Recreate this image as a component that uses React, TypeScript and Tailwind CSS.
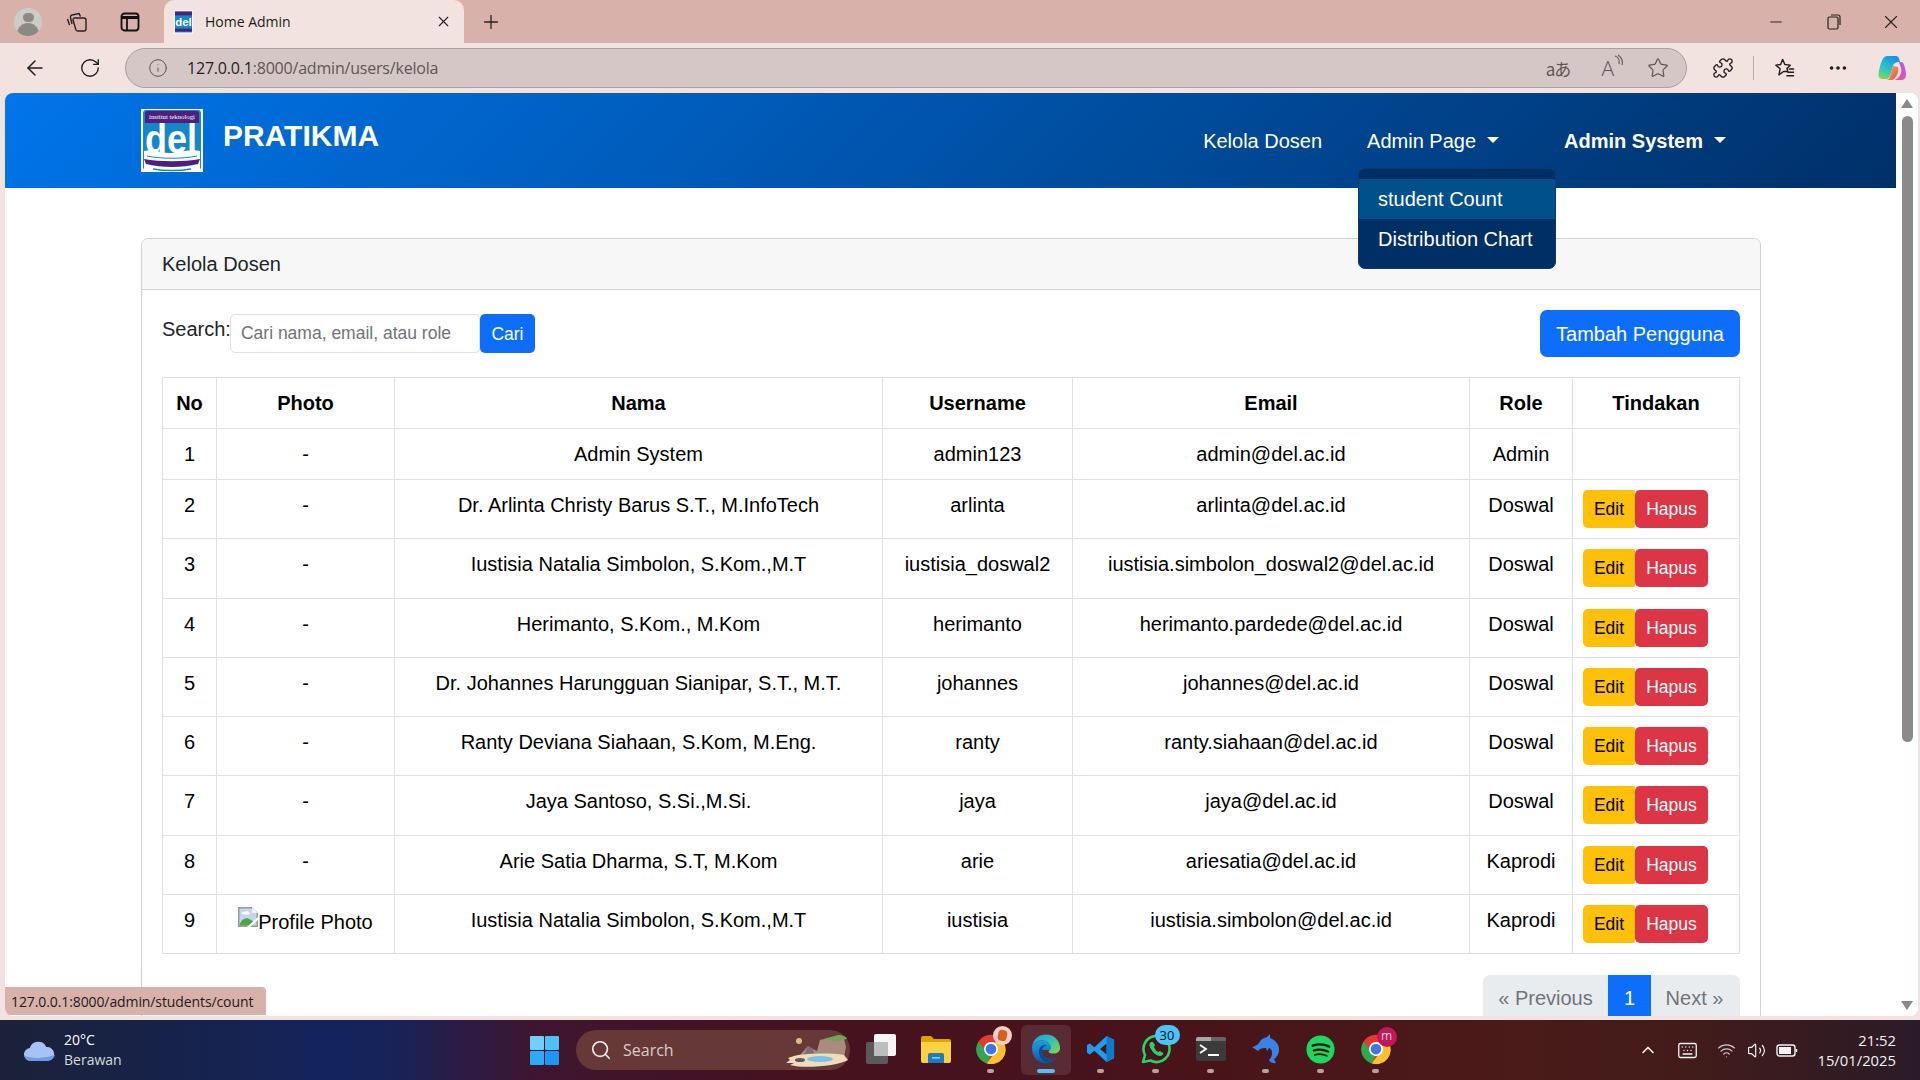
import React from 'react';
import { ArrowLeft, RotateCw, Info, Star, Puzzle, MoreHorizontal, Plus, X, Minus, Search, ChevronUp, Volume2, Wifi, Keyboard } from 'lucide-react';

const users = [
  { no: 1, photo: '-', nama: 'Admin System', username: 'admin123', email: 'admin@del.ac.id', role: 'Admin' },
  { no: 2, photo: '-', nama: 'Dr. Arlinta Christy Barus S.T., M.InfoTech', username: 'arlinta', email: 'arlinta@del.ac.id', role: 'Doswal' },
  { no: 3, photo: '-', nama: 'Iustisia Natalia Simbolon, S.Kom.,M.T', username: 'iustisia_doswal2', email: 'iustisia.simbolon_doswal2@del.ac.id', role: 'Doswal' },
  { no: 4, photo: '-', nama: 'Herimanto, S.Kom., M.Kom', username: 'herimanto', email: 'herimanto.pardede@del.ac.id', role: 'Doswal' },
  { no: 5, photo: '-', nama: 'Dr. Johannes Harungguan Sianipar, S.T., M.T.', username: 'johannes', email: 'johannes@del.ac.id', role: 'Doswal' },
  { no: 6, photo: '-', nama: 'Ranty Deviana Siahaan, S.Kom, M.Eng.', username: 'ranty', email: 'ranty.siahaan@del.ac.id', role: 'Doswal' },
  { no: 7, photo: '-', nama: 'Jaya Santoso, S.Si.,M.Si.', username: 'jaya', email: 'jaya@del.ac.id', role: 'Doswal' },
  { no: 8, photo: '-', nama: 'Arie Satia Dharma, S.T, M.Kom', username: 'arie', email: 'ariesatia@del.ac.id', role: 'Kaprodi' },
  { no: 9, photo: 'img', nama: 'Iustisia Natalia Simbolon, S.Kom.,M.T', username: 'iustisia', email: 'iustisia.simbolon@del.ac.id', role: 'Kaprodi' },
];

const DelLogo = ({ className }: { className?: string }) => (
  <svg viewBox="0 0 62 63" className={className}>
    <rect width="62" height="63" fill="#fff" />
    <rect x="2" y="1" width="58" height="60" rx="3" fill="#1587c9" />
    <path d="M4 4a2 2 0 0 1 2-2h50a2 2 0 0 1 2 2v10H4z" fill="#4d1f7f" />
    <text x="31" y="10" textAnchor="middle" fontSize="6.500" fontFamily="'Liberation Serif', serif" fill="#fff" textLength="46" lengthAdjust="spacingAndGlyphs">institut teknologi</text>
    <text x="30" y="44" textAnchor="middle" fontSize="40" fontFamily="'Liberation Sans', sans-serif" fontWeight="700" fill="#fff" textLength="52" lengthAdjust="spacingAndGlyphs">del</text>
    <path d="M3 42c10-3 18 3 28 2s18-4 28-2v19H3z" fill="#fff" />
    <path d="M6 47c14 3 36 3 50 0" fill="none" stroke="#1587c9" strokeWidth="1" />
    <path d="M3 50c16 3 40 3 56 0l-2 5c-16 4-36 4-52 0z" fill="#4d1f7f" />
    <path d="M12 60c12 2 26 2 38 0" fill="none" stroke="#1587c9" strokeWidth="1.500" />
  </svg>
);

const TabFavicon = () => (
  <svg viewBox="0 0 20 24" className="w-[19px] h-[24px]">
    <rect width="20" height="24" fill="#fff" />
    <rect x="1" y="1" width="18" height="22" fill="#1587c9" />
    <rect x="1" y="1" width="18" height="4" fill="#4d1f7f" />
    <text x="10" y="16" textAnchor="middle" fontSize="12" fontWeight="700" fontFamily="'Liberation Sans', sans-serif" fill="#fff">del</text>
    <rect x="1" y="19" width="18" height="3" fill="#4d1f7f" />
  </svg>
);

const ChromeGlyph = ({ className }: { className?: string }) => (
  <svg viewBox="0 0 24 24" className={className}>
    <circle cx="12" cy="12" r="11.500" fill="#e33b2e" />
    <path d="M2 6.200 7 12l4.500 5.500-3 6A11.500 11.500 0 0 1 2 6.200z" fill="#2fa84f" />
    <path d="M12 6.500h10a11.500 11.500 0 0 1-13.500 17L15 15z" fill="#fbc02d" />
    <circle cx="12" cy="12" r="5.600" fill="#fff" />
    <circle cx="12" cy="12" r="4.300" fill="#3b78e7" />
  </svg>
);

const EdgeGlyph = () => (
  <svg viewBox="0 0 30 30" className="w-[30px] h-[30px]">
    <defs>
      <linearGradient id="edgeTop" x1="0" y1="0" x2="1" y2="1">
        <stop offset="0" stopColor="#1b9de2" />
        <stop offset="0.5" stopColor="#35c1b0" />
        <stop offset="1" stopColor="#7fdc4c" />
      </linearGradient>
      <linearGradient id="edgeLeft" x1="0" y1="0" x2="0" y2="1">
        <stop offset="0" stopColor="#1e9fe0" />
        <stop offset="1" stopColor="#0c59a4" />
      </linearGradient>
    </defs>
    <path d="M1 13C2 5 8 .5 15 .5c8 0 14 6 14 13.500 0 4-3 5.500-6.500 5.500-3 0-5-.5-5-2 0-1 2-1 2-4 0-4-4-7-8.500-7C6 6.500 2 9 1 13z" fill="url(#edgeTop)" />
    <path d="M1 13c1-4 5-6.500 10.500-6.500 4.500 0 8.500 3 8.500 7 0 1-.5 1.500-1 2.500H11c-1 5 4 9 9 9 2 0 4-.5 5-1-3 3-6 5-10 5C7 29.500.5 23 1 13z" fill="url(#edgeLeft)" />
    <path d="M11 17c0-3 2-5 4.500-5.500C12 10 8 13 8 18c0 5 4 10 10 11 2 0 5-1.500 7-5-2 1-3 1-5 1-5 0-10-4-9-8z" fill="#114a8b" />
  </svg>
);

const FolderGlyph = () => (
  <svg viewBox="0 0 30 28" className="w-[30px] h-[28px]">
    <path d="M0 3a2 2 0 0 1 2-2h8l3 3h15a2 2 0 0 1 2 2v4H0z" fill="#e0a106" />
    <path d="M0 7h30v19a2 2 0 0 1-2 2H2a2 2 0 0 1-2-2z" fill="#fdd23e" />
    <path d="M7 20a2 2 0 0 1 2-2h12a2 2 0 0 1 2 2v8H7z" fill="#1a7bc9" />
    <rect x="11" y="22" width="8" height="1.500" fill="#8fd0f5" />
  </svg>
);

const WhatsappGlyph = () => (
  <svg viewBox="0 0 30 30" className="w-[30px] h-[30px]">
    <path d="M2 28l2-7A13 13 0 1 1 9.500 26.500z" fill="none" stroke="#25d366" strokeWidth="2.600" strokeLinejoin="round" />
    <path d="M10 8c-2 1-2 4 0 7 2 4 6 7 9 7 2 0 4-2 3-3l-3-2-2 1c-2-1-3-3-4-5l1-2-2-3z" fill="#25d366" />
  </svg>
);

const TerminalGlyph = () => (
  <svg viewBox="0 0 30 24" className="w-[30px] h-[24px]">
    <rect width="30" height="24" rx="2" fill="#3b3b3b" />
    <path d="M0 2a2 2 0 0 1 2-2h13v4H0z" fill="#a8a8a8" />
    <path d="M15 0h13a2 2 0 0 1 2 2v2H15z" fill="#666" />
    <path d="M4 8l6 4-6 4" fill="none" stroke="#fff" strokeWidth="1.800" />
    <rect x="12" y="17" width="11" height="2" fill="#fff" />
  </svg>
);

const DolphinGlyph = () => (
  <svg viewBox="0 0 28 30" className="w-[28px] h-[30px]">
    <path d="M0 13c3-.5 5-2 7-4 1-3 4-5 8-6l3-3v4c5 2 9 6 9 11 0 5-2 8-5 10l2 4c-3 .5-6-.5-7-3 1-1 3-3 3-7 0-3-1-4-3-5l-2 3-1-3c-2 0-4 0-6 1l-2 2z" fill="#3b82e8" />
  </svg>
);

const SpotifyGlyph = () => (
  <svg viewBox="0 0 30 30" className="w-[29px] h-[29px]">
    <circle cx="15" cy="15" r="14.500" fill="#1ed760" />
    <path d="M7 11c6-2 12-1.500 17 1" fill="none" stroke="#191414" strokeWidth="2.500" strokeLinecap="round" />
    <path d="M8 16c5-1.500 10-1 15 1.200" fill="none" stroke="#191414" strokeWidth="2.200" strokeLinecap="round" />
    <path d="M9 20.500c4-1 9-.6 12.500 1" fill="none" stroke="#191414" strokeWidth="1.800" strokeLinecap="round" />
  </svg>
);

const VsCodeGlyph = () => (
  <svg viewBox="0 0 30 30" className="w-[28px] h-[28px]">
    <path d="M21 1l8 4v20l-8 4L8 17l-5 4-3-2v-8l3-2 5 4zM21 9l-7 6 7 6z" fill="#1f9cf0" />
    <path d="M21 1l8 4v20l-8 4z" fill="#0a7cc9" />
  </svg>
);

const CopilotGlyph = () => (
  <svg viewBox="0 0 28 26" className="w-[28px] h-[26px]">
    <defs>
      <linearGradient id="copA" x1="0.700" y1="0" x2="0.200" y2="1">
        <stop offset="0" stopColor="#1a8ff0" />
        <stop offset="0.600" stopColor="#2cc7c0" />
        <stop offset="1" stopColor="#7ed957" />
      </linearGradient>
      <linearGradient id="copB" x1="0.900" y1="0" x2="0.300" y2="1">
        <stop offset="0" stopColor="#b45cf0" />
        <stop offset="1" stopColor="#f04fa8" />
      </linearGradient>
      <linearGradient id="copC" x1="0" y1="0" x2="1" y2="1">
        <stop offset="0" stopColor="#f8b63c" />
        <stop offset="1" stopColor="#ef4b4b" />
      </linearGradient>
    </defs>
    <path d="M9 1h9c1.500 0 2.500 1 3 2.500L22 7c-4 0-6 1-7 4l-3 10c-.5 2-2 3-4 3H5c-3 0-5-2-4.500-5C1.500 12 4 1 9 1z" fill="url(#copA)" />
    <path d="M21 7h2.500c2.500 0 4.500 8 4.500 13 0 3-2 5-5 5h-6l3-2c3-3 4-7 3-10z" fill="url(#copB)" />
    <path d="M15 11l5 1c1 4-.5 8-3 11-1 1.500-2.500 2-4 2H8c2 0 3.500-1 4-3z" fill="url(#copC)" />
  </svg>
);

const BrokenImage = () => (
  <svg viewBox="0 0 20 20" className="w-[20px] h-[20px] align-top inline-block">
    <path d="M0 0h14l6 6v14H0z" fill="#9a9a9a" />
    <path d="M1.500 1.500h12l5 5v12h-17z" fill="#c2d5f2" />
    <path d="M3 6c2-2 4-1 6-2 1 1 3 1 3 3-3 1-6 1-9-1z" fill="#fff" />
    <path d="M1.500 18.500c1-5 5-8 9-7l5 3-4 4z" fill="#4ea63a" />
    <path d="M9 20l11-10v3l-8 7z" fill="#fff" />
    <path d="M14 0v6h6z" fill="#f1f1f1" />
  </svg>
);

const Caret = () => (
  <span className="ml-[11px] inline-block w-0 h-0 border-x-[6px] border-x-transparent border-t-[6px] border-t-white -translate-y-[5px]" />
);

const TaskIcon = ({ children, dot, active }: { children: React.ReactNode; dot?: boolean; active?: boolean }) => (
  <div className={`relative w-[50px] h-[50px] mx-[2.500px] flex items-center justify-center rounded-md ${active ? 'bg-white/10' : ''}`}>
    <div className="-translate-y-[1px] flex items-center justify-center">{children}</div>
    {dot && <span className={`absolute bottom-[2px] h-[4px] rounded-full ${active ? 'w-[18px] bg-[#4cc2ff]' : 'w-[7px] bg-[#b5a3a3]'}`} />}
  </div>
);

const Th = ({ children }: { children: React.ReactNode }) => (
  <th className="border border-[#dee2e6] px-[10px] py-[10px] text-center font-bold text-black">{children}</th>
);

const Td = ({ children }: { children?: React.ReactNode }) => (
  <td className="border border-[#dee2e6] px-[10px] py-[10px] text-center align-top text-black">{children}</td>
);

export default function App() {
  return (
    <div className="w-[1920px] h-[1080px] overflow-hidden bg-[#f2e3e1] font-['Liberation_Sans',Arial,sans-serif]">
      {/* tab strip */}
      <div className="h-[43px] bg-[#d8b1aa] flex items-center pr-[18px] font-['Open_Sans',sans-serif]">
        <div className="ml-[14px] w-[28px] h-[28px] rounded-full bg-[#cdcbc6] overflow-hidden flex flex-col items-center shrink-0">
          <span className="mt-[5px] w-[11px] h-[11px] rounded-full bg-[#8a8985]" />
          <span className="mt-[1px] w-[22px] h-[14px] rounded-t-full bg-[#8a8985]" />
        </div>
        <svg viewBox="0 0 22 22" className="ml-[24px] w-[22px] h-[22px] shrink-0" fill="none" stroke="#222" strokeWidth="1.400">
          <path d="M8 7h10a2 2 0 0 1 2 2v9a2 2 0 0 1-2 2h-6a2 2 0 0 1-2-1L7 9a2 2 0 0 1 1-2z" />
          <path d="M6 13 4.500 6.500A2 2 0 0 1 6 4l7-1.500 1.500 3" />
          <path d="M3.500 14 1.500 8" />
        </svg>
        <svg viewBox="0 0 20 20" className="ml-[32px] w-[20px] h-[20px] shrink-0" fill="none" stroke="#111" strokeWidth="1.800">
          <rect x="1.500" y="1.500" width="17" height="17" rx="3" />
          <path d="M1.500 5.500h17" strokeWidth="3" />
          <path d="M7 6v12" />
        </svg>
        <div className="ml-[24px] w-[300px] h-[43px] self-end bg-[#f2e3e1] rounded-t-[10px] flex items-center pl-[10px] pr-[12px] shrink-0">
          <div className="w-[20px] flex"><TabFavicon /></div>
          <span className="ml-[11px] flex-1 text-[14px] text-[#1c1c1c]">Home Admin</span>
          <X size={17} strokeWidth={1.600} className="text-[#222]" />
        </div>
        <Plus size={22} strokeWidth={1.400} className="ml-[16px] text-[#222]" />
        <div className="ml-auto flex items-center text-[#222]">
          <Minus size={18} strokeWidth={1.300} />
          <svg viewBox="0 0 14 16" className="ml-[42px] w-[14px] h-[16px]" fill="none" stroke="#222" strokeWidth="1.200">
            <rect x="1" y="3" width="10" height="12" rx="1.500" />
            <path d="M4 1h7a2 2 0 0 1 2 2v8" />
          </svg>
          <X size={22} strokeWidth={1.200} className="ml-[39px]" />
        </div>
      </div>

      {/* address bar row */}
      <div className="h-[50px] flex items-center font-['Open_Sans',sans-serif] text-[#1f1f1f]">
        <ArrowLeft size={24} strokeWidth={1.500} className="ml-[23px]" />
        <RotateCw size={22} strokeWidth={1.500} className="ml-[32px]" />
        <div className="ml-[24px] w-[1562px] h-[40px] rounded-full bg-[#d5c7c5] border border-[#ac9e9c] flex items-center pl-[22px] pr-[17px]">
          <Info size={20} strokeWidth={1.200} className="text-[#5f5655]" />
          <span className="ml-[19px] text-[16px] tracking-[-0.2px]">127.0.0.1<span className="text-[#5f5655]">:8000/admin/users/kelola</span></span>
          <div className="ml-auto flex items-center text-[#5f5655]">
            <span className="text-[17px] leading-none tracking-[-1px] font-['Noto_Sans_CJK_JP','Open_Sans',sans-serif]">aあ</span>
            <span className="ml-[31px] relative text-[21px] leading-none font-light">
              A
              <svg viewBox="0 0 10 14" className="absolute -top-[4px] -right-[10px] w-[10px] h-[14px]" fill="none" stroke="#5f5655" strokeWidth="1.100">
                <path d="M1 2c3 1 5 4 4 8" />
                <path d="M4 1c3 2 5 6 4 10" />
              </svg>
            </span>
            <Star size={22} strokeWidth={1.300} className="ml-[33px]" />
          </div>
        </div>
        <Puzzle size={22} strokeWidth={1.500} className="ml-[25px]" />
        <span className="ml-[19px] w-px h-[24px] bg-[#b9acaa]" />
        <svg viewBox="0 0 24 24" className="ml-[19px] w-[23px] h-[23px]" fill="none" stroke="#1f1f1f" strokeWidth="1.500" strokeLinejoin="round">
          <path d="M10 2.500l2.400 5.300 5.600.7-3.500 3.600 1 3H11l-4.800 3.500 1.200-6.300L3 8.500l5-.7z" />
          <path d="M15 16h7M16.500 12.500H22M14 19.500h8" />
        </svg>
        <MoreHorizontal size={22} strokeWidth={2} className="ml-[31px]" />
        <div className="ml-[29px] flex"><CopilotGlyph /></div>
      </div>

      {/* page viewport */}
      <div className="ml-[5px] mr-[2px] h-[923px] flex rounded-[8px] overflow-hidden bg-white">
        <div className="relative w-[1891px] overflow-hidden bg-white">
          <nav className="relative h-[95px] bg-[linear-gradient(135deg,#0075ea,#003068)] flex items-start text-white">
            <div className="ml-[136px] mt-[16px] w-[62px] flex"><DelLogo className="w-[62px] h-[63px]" /></div>
            <span className="ml-[20px] mt-[24px] text-[30px] leading-[38px] font-bold">PRATIKMA</span>
            <div className="ml-auto mr-[170px] mt-[33px] flex items-center text-[20px] leading-[30px]">
              <span className="whitespace-nowrap">Kelola Dosen</span>
              <span className="ml-[45px] whitespace-nowrap">Admin Page<Caret /></span>
              <span className="ml-[65px] font-bold whitespace-nowrap">Admin System<Caret /></span>
            </div>
            <div className="absolute left-[1353px] top-[75px] w-[198px] h-[101px] rounded-[7px] bg-[#002f66] border border-[#0b3a70] py-[10px] text-[20px] z-10">
              <div className="h-[40px] bg-[#00508c] pl-[19px] leading-[40px]">student Count</div>
              <div className="h-[40px] pl-[19px] leading-[40px] whitespace-nowrap">Distribution Chart</div>
            </div>
          </nav>

          <div className="ml-[136px] mt-[50px] w-[1620px] border border-[#d2d2d2] rounded-[7px] text-[20px] leading-[30px] text-[#212529]">
            <div className="h-[51px] bg-[#f7f7f7] border-b border-[#d2d2d2] rounded-t-[7px] px-[20px] flex items-center">Kelola Dosen</div>
            <div className="px-[20px] pt-[20px]">
              <div className="flex items-start justify-between h-[47px]">
                <div className="flex items-start">
                  <span className="mt-[4px]">Search:</span>
                  <div className="-ml-[1px] mt-[4px] w-[250px] h-[39px] bg-white border border-[#dee2e6] rounded-[5px] px-[10px] pb-[2px] flex items-center text-[17.500px] text-[#6c757d] whitespace-nowrap">Cari nama, email, atau role</div>
                  <button className="mt-[4px] w-[55px] h-[39px] bg-[#0d6efd] text-white text-[17.500px] rounded-[5px]">Cari</button>
                </div>
                <button className="w-[200px] h-[47px] bg-[#0d6efd] text-white rounded-[7px]">Tambah Pengguna</button>
              </div>

              <table className="mt-[20px] w-[1577px] table-fixed border-collapse">
                <colgroup>
                  <col className="w-[54px]" />
                  <col className="w-[178px]" />
                  <col className="w-[488px]" />
                  <col className="w-[190px]" />
                  <col className="w-[397px]" />
                  <col className="w-[103px]" />
                  <col className="w-[167px]" />
                </colgroup>
                <thead>
                  <tr className="h-[51px]">
                    <Th>No</Th><Th>Photo</Th><Th>Nama</Th><Th>Username</Th><Th>Email</Th><Th>Role</Th><Th>Tindakan</Th>
                  </tr>
                </thead>
                <tbody>
                  {users.map(u => (
                    <tr key={u.no} className={u.no === 1 ? 'h-[51px]' : 'h-[59.250px]'}>
                      <Td>{u.no}</Td>
                      <Td>
                        {u.photo === 'img' ? (
                          <span className="inline-block mt-[2px] whitespace-nowrap"><BrokenImage />Profile Photo</span>
                        ) : '-'}
                      </Td>
                      <Td>{u.nama}</Td>
                      <Td>{u.username}</Td>
                      <Td>{u.email}</Td>
                      <Td>{u.role}</Td>
                      <td className="border border-[#dee2e6] px-[10px] py-[10px] align-top">
                        {u.no !== 1 && (
                          <div className="flex">
                            <button className="w-[52px] h-[38px] bg-[#ffc107] text-black text-[17.500px] rounded-l-[5px] rounded-r-[2px]">Edit</button>
                            <button className="w-[73px] h-[38px] bg-[#dc3545] text-white text-[17.500px] rounded-[5px]">Hapus</button>
                          </div>
                        )}
                      </td>
                    </tr>
                  ))}
                </tbody>
              </table>

              <div className="mt-[21px] flex justify-end">
                <div className="flex h-[46px] rounded-t-[7px] overflow-hidden bg-[#e9ecef] text-[#6c757d]">
                  <span className="w-[125px] flex items-center justify-center">« Previous</span>
                  <span className="w-[43px] flex items-center justify-center bg-[#0d6efd] text-white">1</span>
                  <span className="w-[89px] pr-[2px] flex items-center justify-center">Next »</span>
                </div>
              </div>
            </div>
          </div>

          <div className="absolute left-0 bottom-[1px] h-[28px] w-[261px] bg-[#d8b1aa] rounded-tr-[4px] flex items-center pl-[6px] text-[14px] text-[#1c1c1c] font-['Open_Sans',sans-serif] whitespace-nowrap tracking-[-0.1px]">127.0.0.1:8000/admin/students/count</div>
        </div>

        {/* scrollbar */}
        <div className="w-[22px] flex flex-col items-center bg-white pt-[6px] pb-[6px]">
          <span className="w-0 h-0 border-x-[6px] border-x-transparent border-b-[9px] border-b-[#8a8a8a]" />
          <span className="mt-[8px] w-[11px] h-[626px] rounded-full bg-[#8a8a8a]" />
          <span className="mt-auto w-0 h-0 border-x-[6px] border-x-transparent border-t-[9px] border-t-[#8a8a8a]" />
        </div>
      </div>

      {/* taskbar */}
      <div className="mt-[4px] h-[60px] flex items-center text-white font-['Open_Sans',sans-serif] bg-[linear-gradient(90deg,#1b2238_0%,#14235c_17%,#16235a_20%,#3f1530_28%,#45121f_42%,#48131a_60%,#4a1a18_78%,#421c1a_88%,#2a1b28_100%)]">
        <div className="w-[530px] flex items-center pl-[24px] shrink-0">
          <svg viewBox="0 0 32 22" className="w-[31px] h-[22px]">
            <path d="M7 22a6.500 6.500 0 0 1-1-13 9 9 0 0 1 17-1 7 7 0 0 1 2 14z" fill="#a5c4f5" />
            <path d="M0 17c8 3 24 3 32-1-1 4-4 6-7 6H7c-3 0-6-2-7-5z" fill="#6f9bea" />
          </svg>
          <div className="ml-[9px] text-[14px] leading-[20px]">
            <div>20°C</div>
            <div className="text-[#d9d9d9]">Berawan</div>
          </div>
        </div>
        <svg viewBox="0 0 29 29" className="w-[29px] h-[29px] shrink-0">
          <rect width="14" height="14" rx="1" fill="#6fd0f8" />
          <rect x="15" width="14" height="14" rx="1" fill="#4cc2f7" />
          <rect y="15" width="14" height="14" rx="1" fill="#2eaaf7" />
          <rect x="15" y="15" width="14" height="14" rx="1" fill="#1b97f7" />
        </svg>
        <div className="ml-[17px] w-[274px] h-[40px] rounded-full bg-[#673838] flex items-center pl-[14px] shrink-0">
          <Search size={22} strokeWidth={1.800} className="text-[#eee]" />
          <span className="ml-[11px] text-[16px] text-[#d9cccc]">Search</span>
          <svg viewBox="0 0 62 34" className="ml-auto mr-[2px] w-[62px] h-[34px]">
            <circle cx="13" cy="8" r="3" fill="#d9c17a" />
            <path d="M14 22l8-9 5 3 4 2 3-11 16-4 8 3 2 8-2 10H14z" fill="#a98b80" />
            <path d="M22 13l5 3 1 6H18z" fill="#7e6a78" />
            <path d="M38 6l14-4c4 0 8 1 9 4l-12 2z" fill="#6aa84f" />
            <path d="M0 30l4-3-2-2 6-2c14-3 38-3 50-1l4 5c-10 6-44 9-58 5l4-2z" fill="#efdcb8" />
            <ellipse cx="34" cy="26" rx="13" ry="3" fill="#7dc0e8" />
            <ellipse cx="14" cy="27" rx="5" ry="2" fill="#5d5560" />
          </svg>
        </div>
        <div className="ml-[3px] flex items-center shrink-0">
          <TaskIcon>
            <svg viewBox="0 0 30 30" className="w-[30px] h-[30px]">
              <rect x="0" y="8" width="22" height="22" rx="2" fill="#5a5a5a" />
              <rect x="8" y="0" width="22" height="22" rx="2" fill="#f5f5f5" />
              <rect x="8" y="8" width="14" height="14" fill="#bdbdbd" />
            </svg>
          </TaskIcon>
          <TaskIcon><FolderGlyph /></TaskIcon>
          <TaskIcon dot>
            <div className="relative flex">
              <ChromeGlyph className="w-[30px] h-[30px]" />
              <span className="absolute -top-[8px] -right-[6px] w-[19px] h-[19px] rounded-full bg-[#f0cfc8] flex items-center justify-center">
                <span className="w-[9px] h-[11px] bg-[#d4601f] rounded-sm rotate-12" />
              </span>
            </div>
          </TaskIcon>
          <TaskIcon dot active><EdgeGlyph /></TaskIcon>
          <TaskIcon dot><VsCodeGlyph /></TaskIcon>
          <TaskIcon dot>
            <div className="relative flex">
              <WhatsappGlyph />
              <span className="absolute -top-[9px] -right-[9px] w-[25px] h-[20px] rounded-full bg-[#4cc2ff] text-[#111] text-[13px] leading-[20px] text-center">30</span>
            </div>
          </TaskIcon>
          <TaskIcon dot><TerminalGlyph /></TaskIcon>
          <TaskIcon dot><DolphinGlyph /></TaskIcon>
          <TaskIcon dot><SpotifyGlyph /></TaskIcon>
          <TaskIcon dot>
            <div className="relative flex">
              <ChromeGlyph className="w-[30px] h-[30px]" />
              <span className="absolute -top-[7px] -right-[6px] w-[20px] h-[20px] rounded-full bg-[#c2185b] text-[#f5d5e2] text-[12px] leading-[17px] text-center">m</span>
            </div>
          </TaskIcon>
        </div>
        <div className="ml-auto flex items-center pr-[24px] text-[#f3f3f3]">
          <ChevronUp size={20} strokeWidth={2} />
          <Keyboard size={21} strokeWidth={1.500} className="ml-[19px]" />
          <Wifi size={19} strokeWidth={1.500} className="ml-[19px] text-[#cfc6c6]" />
          <Volume2 size={19} strokeWidth={1.500} className="ml-[11px]" />
          <svg viewBox="0 0 22 14" className="ml-[10px] w-[22px] h-[14px]" fill="none" stroke="#f3f3f3" strokeWidth="1.400">
            <rect x="1" y="2" width="18" height="11" rx="2.500" />
            <rect x="3" y="4" width="12" height="7" fill="#f3f3f3" stroke="none" />
            <path d="M20.500 6v3" />
          </svg>
          <div className="ml-[19px] text-[14.800px] leading-[20px] text-right">
            <div>21:52</div>
            <div>15/01/2025</div>
          </div>
        </div>
      </div>
    </div>
  );
}
